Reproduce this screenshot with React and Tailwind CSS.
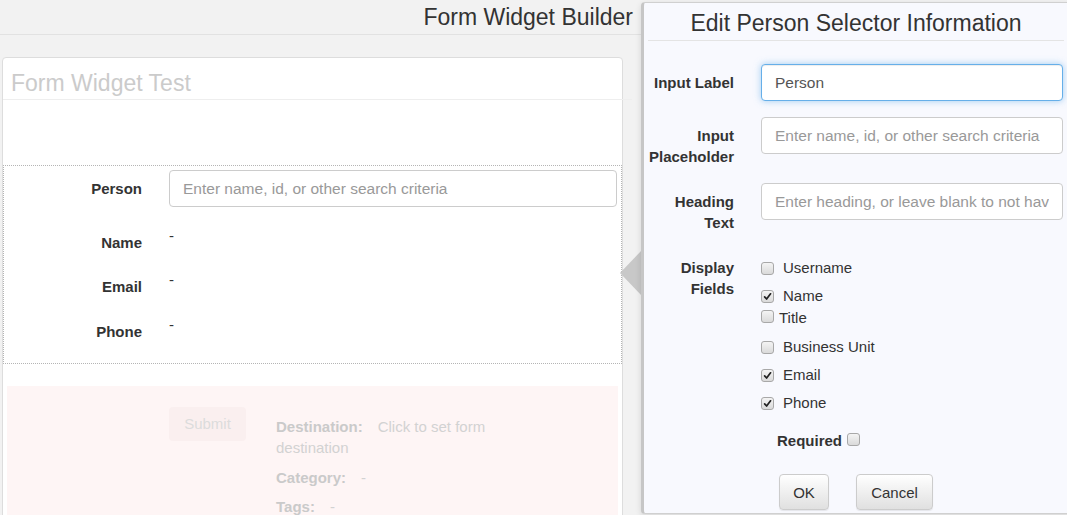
import React from 'react';

const font = "font-['Liberation_Sans',Arial,Helvetica,sans-serif]";

function Box({ checked }) {
  return (
    <span className="flex w-[13px] h-[13px] shrink-0 items-center justify-center rounded-[3px] border border-[#a8a8a8] bg-linear-to-b from-[#f4f4f4] to-[#dadada]">
      {checked && (
        <svg width="9" height="9" viewBox="0 0 10 10">
          <path d="M1.8 5.4 L4 7.8 L8.4 2" fill="none" stroke="#222" strokeWidth="1.9" strokeLinecap="round" strokeLinejoin="round" />
        </svg>
      )}
    </span>
  );
}

function Field({ label, children }) {
  return (
    <div className="flex items-start mb-[16px]">
      <label className="w-[87px] shrink-0 text-right font-bold text-[15px] leading-[21px] pt-[8px] text-[#333]">
        {label}
      </label>
      <div className="ml-[27px] w-[302px]">{children}</div>
    </div>
  );
}

const inputCls =
  'w-full h-[37px] rounded-[4px] border bg-white px-[13px] text-[15.5px] text-[#555] placeholder:text-[#999] outline-none';

function PersonRow({ label }) {
  return (
    <div className="flex items-start">
      <div className="w-[138px] shrink-0 text-right font-bold text-[15px] leading-[20px] pt-[7px] text-[#333]">{label}</div>
      <div className="ml-[27px] text-[15px] leading-[20px] text-[#333]">-</div>
    </div>
  );
}

export default function App() {
  const fields = [
    { name: 'Username', checked: false, mt: 'mt-0' },
    { name: 'Name', checked: true, mt: 'mt-[7px]' },
    { name: 'Title', checked: false, mt: 'mt-[1px]', tight: true },
    { name: 'Business Unit', checked: false, mt: 'mt-[8px]' },
    { name: 'Email', checked: true, mt: 'mt-[7px]' },
    { name: 'Phone', checked: true, mt: 'mt-[7px]' },
  ];

  return (
    <div className={`relative w-full h-[515px] overflow-hidden bg-[#f2f2f2] text-[#333] ${font}`}>
      {/* header */}
      <div className="h-[35px] border-b border-[#e2e2e2]">
        <div className="w-[640px] text-right pr-[7px] text-[23px] leading-[34px] text-[#333]">Form Widget Builder</div>
      </div>

      {/* form preview card */}
      <div className="pl-[2px] pt-[22px]">
        <div className="w-[621px] rounded-t-[4px] border border-[#ddd] bg-white pb-[40px]">
          <div className="h-[42px] mr-[-10px] border-b border-[#eee] pl-[8px] pt-[10px] text-[23px] leading-[30px] text-[#cbcbcb]">
            Form Widget Test
          </div>
          <div className="h-[65px]" />

          <div className="border border-dotted border-[#b5b5b5] pt-[4px] pb-[21px]">
            <div className="flex items-center">
              <div className="w-[138px] shrink-0 text-right font-bold text-[15px] leading-[37px] text-[#333]">Person</div>
              <input
                className={`ml-[27px] !w-[448px] ${inputCls} border-[#ccc]`}
                placeholder="Enter name, id, or other search criteria"
                readOnly
              />
            </div>
            <div className="mt-[19px]">
              <PersonRow label="Name" />
            </div>
            <div className="mt-[17px]">
              <PersonRow label="Email" />
            </div>
            <div className="mt-[18px]">
              <PersonRow label="Phone" />
            </div>
          </div>

          <div className="mt-[22px] mx-[4px] bg-[#fef5f5] flex pl-[162px] pb-[20px]">
            <button className="mt-[21px] w-[77px] h-[34px] rounded-[4px] bg-[#faefef] text-[15px] text-[#dcdcdc]">Submit</button>
            <div className="ml-[30px] w-[240px] pt-[30px] text-[15px] leading-[21px] text-[#d2d2d2]">
              <p>
                <b className="font-bold text-[#cacaca] mr-[15px]">Destination:</b>Click to set form destination
              </p>
              <p className="mt-[9px]">
                <b className="font-bold text-[#cacaca] mr-[15px]">Category:</b>-
              </p>
              <p className="mt-[8px]">
                <b className="font-bold text-[#cacaca] mr-[15px]">Tags:</b>-
              </p>
            </div>
          </div>
        </div>
      </div>

      {/* popover arrow */}
      <div className="absolute left-[620px] top-[250px] w-0 h-0 border-y-[23px] border-y-transparent border-r-[22px] border-r-[#c8c8c8]" />

      {/* edit popover */}
      <div className="absolute left-[641px] top-[2px] w-[430px] h-[512px] rounded-[4px] border border-[#d0d0d0] border-l-[3px] border-l-[#c6c6c6] bg-[#f8f9fe] shadow-[0_2px_6px_rgba(0,0,0,0.12)]">
        <div className="ml-[4px] mr-[6px] h-[38px] border-b border-[#e4e4e4] pt-[2px] text-center text-[23px] leading-[36px] text-[#333]">
          Edit Person Selector Information
        </div>

        <div className="pt-[23px] pl-[3px]">
          <Field label="Input Label">
            <input
              className={`${inputCls} border-[#66afe9] shadow-[inset_0_1px_1px_rgba(0,0,0,0.075),0_0_7px_rgba(102,175,233,0.6)]`}
              defaultValue="Person"
            />
          </Field>
          <Field label="Input Placeholder">
            <input className={`${inputCls} border-[#ccc]`} defaultValue="" placeholder="Enter name, id, or other search criteria" />
          </Field>
          <Field label="Heading Text">
            <input
              className={`${inputCls} border-[#ccc]`}
              placeholder="Enter heading, or leave blank to not have a heading"
            />
          </Field>

          <div className="flex items-start">
            <label className="w-[87px] shrink-0 text-right font-bold text-[15px] leading-[21px] pt-[8px] text-[#333]">
              Display Fields
            </label>
            <div className="ml-[27px] pt-[8px] text-[15px] leading-[21px] text-[#333]">
              {fields.map((f) => (
                <div key={f.name} className={`flex items-center h-[21px] ${f.mt}`}>
                  <span className={`flex ${f.tight ? '-mt-[3px]' : 'mt-[2px]'}`}>
                    <Box checked={f.checked} />
                  </span>
                  <span className={f.tight ? 'ml-[5px]' : 'ml-[9px]'}>{f.name}</span>
                </div>
              ))}

              <div className="mt-[17px] ml-[16px] flex items-center h-[21px]">
                <span className="font-bold">Required</span>
                <span className="flex ml-[5px] -mt-[3px]">
                  <Box checked={false} />
                </span>
              </div>

              <div className="mt-[23px] ml-[18px] flex">
                <button className="w-[50px] h-[36px] rounded-[4px] border border-[#ccc] bg-linear-to-b from-white to-[#e0e0e0] text-[15px] text-[#333] shadow-[0_1px_1px_rgba(0,0,0,0.08)]">
                  OK
                </button>
                <button className="ml-[27px] w-[77px] h-[36px] rounded-[4px] border border-[#ccc] bg-linear-to-b from-white to-[#e0e0e0] text-[15px] text-[#333] shadow-[0_1px_1px_rgba(0,0,0,0.08)]">
                  Cancel
                </button>
              </div>
            </div>
          </div>
        </div>
      </div>
    </div>
  );
}
